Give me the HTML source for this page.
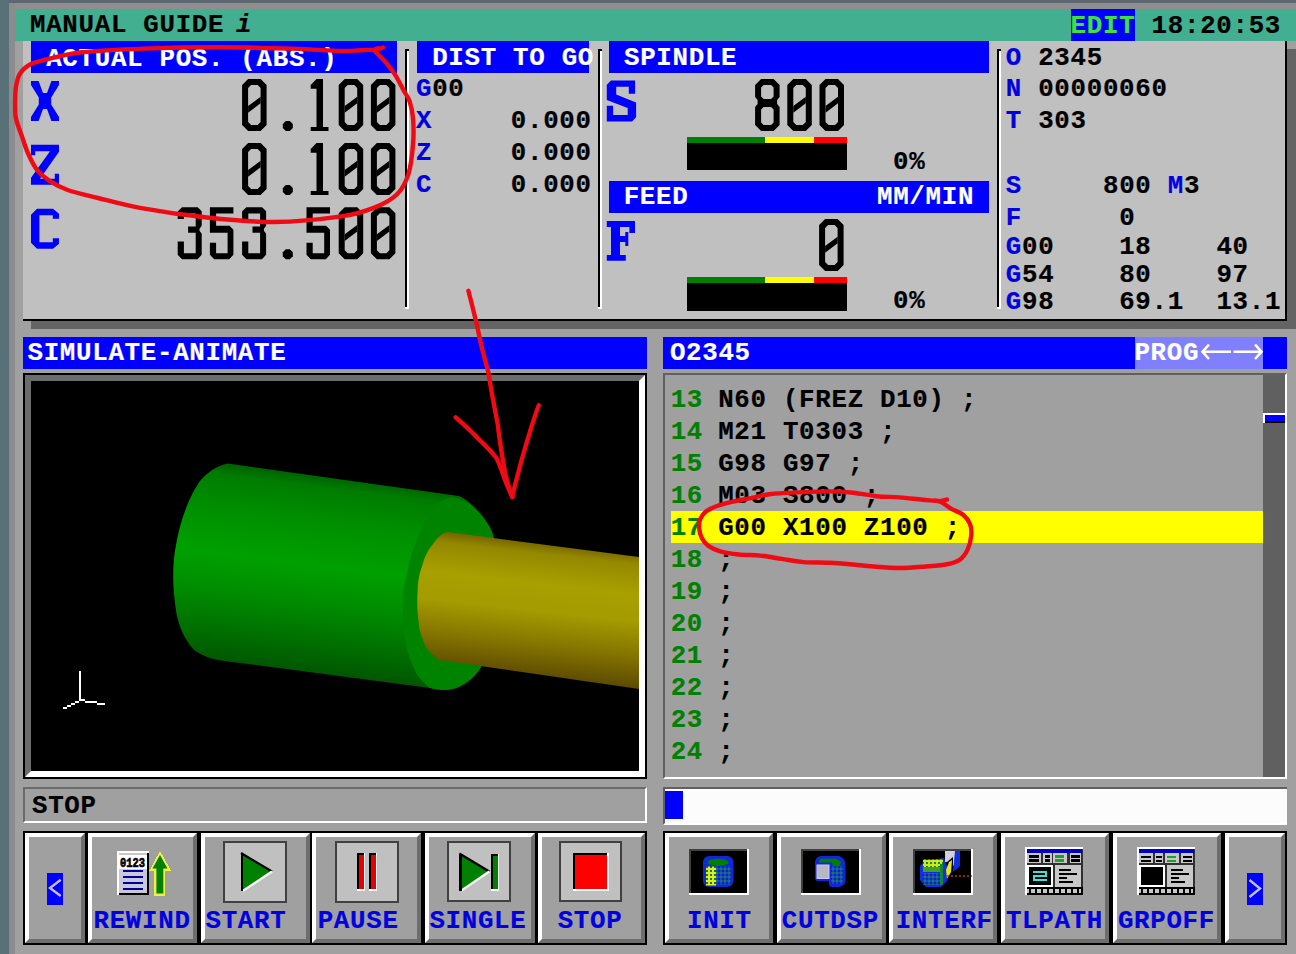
<!DOCTYPE html>
<html><head><meta charset="utf-8"><title>Manual Guide i</title><style>
html,body{margin:0;padding:0;width:1296px;height:954px;overflow:hidden;background:#a0a0a0}
.r{position:absolute;box-sizing:content-box}
.t{position:absolute;font-family:"Liberation Mono",monospace;font-weight:bold;font-size:25.8px;line-height:30px;letter-spacing:0.7px;white-space:pre;-webkit-text-stroke:0.2px currentColor}
.big{position:absolute;font-family:"Liberation Mono",monospace;font-size:76.5px;line-height:90px;white-space:pre;transform-origin:0 0;color:#000}
.lbl{position:absolute;font-family:"Liberation Mono",monospace;font-weight:bold;font-size:63.5px;line-height:70px;white-space:pre;transform-origin:0 0;transform:scaleX(0.76);color:#0000ff}
.serif{position:absolute;font-family:"Liberation Serif",serif;font-weight:bold;font-size:63px;line-height:70px;white-space:pre;transform-origin:0 0;color:#0000ff;-webkit-text-stroke:1.4px #0000ff}
.btn{position:absolute;border-style:solid;border-width:4px;border-color:#fff #6e6e6e #6e6e6e #fff;background:#a0a0a0;box-sizing:content-box}
</style></head><body>
<div class="r" style="left:0px;top:0px;width:1296.00px;height:954.00px;background:#a0a0a0;"></div>
<div class="r" style="left:0px;top:0px;width:1296.00px;height:3.00px;background:#5e6670;"></div>
<div class="r" style="left:0px;top:0px;width:8.50px;height:954.00px;background:#587078;"></div>
<div class="r" style="left:9px;top:3px;width:1287.00px;height:6.00px;background:#8e8e8e;"></div>
<div class="r" style="left:9px;top:3px;width:6.00px;height:951.00px;background:#8c8c8c;"></div>
<div class="r" style="left:15px;top:9px;width:1281.00px;height:31.50px;background:#42b090;"></div>
<div class="t" style="left:30.00px;top:11.00px;color:#000;">MANUAL GUIDE</div>
<div class="t" style="left:236px;top:11px;font-style:italic">i</div>
<div class="r" style="left:1071px;top:9px;width:64.00px;height:31.50px;background:#0000ff;"></div>
<div class="t" style="left:1070.60px;top:12.00px;color:#40e040;">EDIT</div>
<div class="t" style="left:1151.60px;top:12.00px;color:#000;">18:20:53</div>
<div class="r" style="left:31px;top:321px;width:1265.00px;height:7.50px;background:#646464;"></div>
<div class="r" style="left:1287px;top:49px;width:9.00px;height:279.50px;background:#646464;"></div>
<div class="r" style="left:23px;top:40.5px;width:1264.00px;height:280.50px;background:#c0c0c0;"></div>
<div class="r" style="left:1285px;top:40.5px;width:2.00px;height:280.50px;background:#000;"></div>
<div class="r" style="left:23px;top:318.5px;width:1264.00px;height:2.50px;background:#000;"></div>
<div class="r" style="left:31px;top:40.5px;width:366.00px;height:32.00px;background:#0000ff;"></div>
<div class="t" style="left:46.20px;top:44.50px;color:#fff;">ACTUAL POS. (ABS.)</div>
<div class="r" style="left:417px;top:40.5px;width:172.00px;height:32.00px;background:#0000ff;"></div>
<div class="t" style="left:432.20px;top:43.70px;color:#fff;">DIST TO GO</div>
<div class="r" style="left:609px;top:40.5px;width:380.00px;height:32.00px;background:#0000ff;"></div>
<div class="t" style="left:624.00px;top:43.50px;color:#fff;">SPINDLE</div>
<div class="r" style="left:609px;top:180.6px;width:380.00px;height:32.40px;background:#0000ff;"></div>
<div class="t" style="left:623.70px;top:183.00px;color:#fff;">FEED</div>
<div class="t" style="left:877.00px;top:183.00px;color:#fff;">MM/MIN</div>
<div class="r" style="left:405px;top:49px;width:2.20px;height:258.00px;background:#000;"></div>
<div class="r" style="left:407.2px;top:49px;width:1.80px;height:259.60px;background:#fff;"></div>
<div class="r" style="left:405px;top:307px;width:4.00px;height:1.60px;background:#fff;"></div>
<div class="r" style="left:405px;top:49px;width:4.00px;height:2.00px;background:#000;"></div>
<div class="r" style="left:597.6px;top:49px;width:2.20px;height:258.00px;background:#000;"></div>
<div class="r" style="left:599.8000000000001px;top:49px;width:1.80px;height:259.60px;background:#fff;"></div>
<div class="r" style="left:597.6px;top:307px;width:4.00px;height:1.60px;background:#fff;"></div>
<div class="r" style="left:597.6px;top:49px;width:4.00px;height:2.00px;background:#000;"></div>
<div class="r" style="left:997px;top:49px;width:2.20px;height:258.00px;background:#000;"></div>
<div class="r" style="left:999.2px;top:49px;width:1.80px;height:259.60px;background:#fff;"></div>
<div class="r" style="left:997px;top:307px;width:4.00px;height:1.60px;background:#fff;"></div>
<div class="r" style="left:997px;top:49px;width:4.00px;height:2.00px;background:#000;"></div>
<div class="t" style="left:416.00px;top:75.00px;color:#0000e0;">G</div>
<div class="t" style="left:432.20px;top:75.00px;color:#000;">00</div>
<div class="t" style="left:416.00px;top:107.20px;color:#0000e0;">X</div>
<div class="t" style="left:510.80px;top:107.20px;color:#000;">0.000</div>
<div class="t" style="left:416.00px;top:139.20px;color:#0000e0;">Z</div>
<div class="t" style="left:510.80px;top:139.20px;color:#000;">0.000</div>
<div class="t" style="left:416.00px;top:171.20px;color:#0000e0;">C</div>
<div class="t" style="left:510.80px;top:171.20px;color:#000;">0.000</div>
<div class="r" style="left:687px;top:137px;width:78.00px;height:6.30px;background:#008000;"></div>
<div class="r" style="left:765px;top:137px;width:48.50px;height:6.30px;background:#ffff00;"></div>
<div class="r" style="left:813.5px;top:137px;width:33.50px;height:6.30px;background:#ff0000;"></div>
<div class="r" style="left:687px;top:143.3px;width:160.00px;height:27.20px;background:#000;"></div>
<div class="t" style="left:893.00px;top:147.50px;color:#000;">0%</div>
<div class="r" style="left:687px;top:276.5px;width:78.00px;height:6.20px;background:#008000;"></div>
<div class="r" style="left:765px;top:276.5px;width:48.50px;height:6.20px;background:#ffff00;"></div>
<div class="r" style="left:813.5px;top:276.5px;width:33.50px;height:6.20px;background:#ff0000;"></div>
<div class="r" style="left:687px;top:282.7px;width:160.00px;height:28.30px;background:#000;"></div>
<div class="t" style="left:893.00px;top:287.30px;color:#000;">0%</div>
<div class="t" style="left:1005.80px;top:43.50px;color:#0000e0;">O</div>
<div class="t" style="left:1038.20px;top:43.50px;color:#000;">2345</div>
<div class="t" style="left:1005.80px;top:75.40px;color:#0000e0;">N</div>
<div class="t" style="left:1038.20px;top:75.40px;color:#000;">00000060</div>
<div class="t" style="left:1005.80px;top:107.30px;color:#0000e0;">T</div>
<div class="t" style="left:1038.20px;top:107.30px;color:#000;">303</div>
<div class="t" style="left:1005.80px;top:172.00px;color:#0000e0;">S</div>
<div class="t" style="left:1103.00px;top:172.00px;color:#000;">800</div>
<div class="t" style="left:1167.80px;top:172.00px;color:#0000e0;">M</div>
<div class="t" style="left:1184.00px;top:172.00px;color:#000;">3</div>
<div class="t" style="left:1005.80px;top:204.00px;color:#0000e0;">F</div>
<div class="t" style="left:1119.20px;top:204.00px;color:#000;">0</div>
<div class="t" style="left:1005.80px;top:233.00px;color:#0000e0;">G</div>
<div class="t" style="left:1022.00px;top:233.00px;color:#000;">00</div>
<div class="t" style="left:1119.20px;top:233.00px;color:#000;">18</div>
<div class="t" style="left:1216.40px;top:233.00px;color:#000;">40</div>
<div class="t" style="left:1005.80px;top:260.50px;color:#0000e0;">G</div>
<div class="t" style="left:1022.00px;top:260.50px;color:#000;">54</div>
<div class="t" style="left:1119.20px;top:260.50px;color:#000;">80</div>
<div class="t" style="left:1216.40px;top:260.50px;color:#000;">97</div>
<div class="t" style="left:1005.80px;top:288.00px;color:#0000e0;">G</div>
<div class="t" style="left:1022.00px;top:288.00px;color:#000;">98</div>
<div class="t" style="left:1119.20px;top:288.00px;color:#000;">69.1</div>
<div class="t" style="left:1216.40px;top:288.00px;color:#000;">13.1</div>
<div class="r" style="left:23px;top:336.7px;width:624.00px;height:32.30px;background:#0000ff;"></div>
<div class="t" style="left:27.50px;top:339.00px;color:#fff;">SIMULATE-ANIMATE</div>
<div class="r" style="left:23px;top:373px;width:624.00px;height:406.00px;background:#000;"></div>
<div class="r" style="left:25px;top:375px;width:608px;height:390px;border-style:solid;border-width:6px;border-color:#6c6c6c #fff #fff #6c6c6c;background:#000"></div>
<svg style="position:absolute;left:31px;top:381px" width="608" height="390" viewBox="31 381 608 390">
<defs>
<linearGradient id="gg" gradientUnits="userSpaceOnUse" x1="236" y1="466" x2="210" y2="676">
<stop offset="0" stop-color="#006400"/>
<stop offset="0.05" stop-color="#007c00"/>
<stop offset="0.2" stop-color="#008e00"/>
<stop offset="0.42" stop-color="#00a000"/>
<stop offset="0.6" stop-color="#008c00"/>
<stop offset="0.8" stop-color="#006c00"/>
<stop offset="1" stop-color="#004a00"/>
</linearGradient>
<linearGradient id="yg" gradientUnits="userSpaceOnUse" x1="520" y1="540" x2="505" y2="676">
<stop offset="0" stop-color="#746400"/>
<stop offset="0.08" stop-color="#948800"/>
<stop offset="0.3" stop-color="#a8a000"/>
<stop offset="0.5" stop-color="#a49c00"/>
<stop offset="0.75" stop-color="#847400"/>
<stop offset="1" stop-color="#5a4800"/>
</linearGradient>
</defs>
<path d="M228,463.5 L459,496 C470,501 484,515 492,532 L496,545 L496,640 C490,655 480,670 471,679 L445.4,690 L228,661.4 C215,660 202,657 193,649 C185,640 177,625 175,603 C172,580 173,560 176,545 C180,520 190,495 200,481 C208,472 216,466 228,463.5 Z" fill="url(#gg)"/>
<path d="M452.3,497.3 C470,500 484,515 491.5,530.8 C497,545 498,600 494,630 C490,655 480,672 471,679 C463,686 455,690 445.4,690 C437,690 429,688 429.2,687.7 C420,680 415,672 415.4,671.5 C408,655 406,646 406.2,646.2 C402,625 402.7,609.2 402.7,609.2 C403,590 405,580 407.3,572.3 C410,555 415,545 417.7,537.7 C424,522 430,512 433.8,507.7 C440,501 446,498 452.3,497.3 Z" fill="#008400"/>
<path d="M447.7,532 L639,557 L639,689 L447.7,661.2 C440,660 432,659 436.2,657.7 C430,652 427,650 424.6,643.9 C420,633 419,628 418.8,623 C417,610 417,600 417.7,590.8 C418,578 420,572 422.3,565.4 C425,556 428,550 432.7,544.6 C437,538 442,533 447.7,532 Z" fill="url(#yg)"/>
<g fill="#fff">
<rect x="79" y="671" width="2" height="30"/>
<rect x="79" y="699" width="6" height="2"/>
<rect x="85" y="701" width="12" height="2"/>
<rect x="97" y="703" width="8" height="2"/>
<rect x="75" y="701" width="4" height="2"/>
<rect x="71" y="703" width="4" height="2"/>
<rect x="67" y="705" width="4" height="2"/>
<rect x="63" y="707" width="4" height="2"/>
</g>
</svg>

<div class="r" style="left:23px;top:787px;width:620px;height:32px;border-style:solid;border-width:2px;border-color:#6a6a6a #fff #fff #6a6a6a;background:#a0a0a0"></div>
<div class="t" style="left:32.00px;top:792.30px;color:#000;">STOP</div>
<div class="r" style="left:663px;top:336.7px;width:624.00px;height:32.30px;background:#0000ff;"></div>
<div class="r" style="left:1135px;top:336.7px;width:128.00px;height:32.30px;background:#8080ff;"></div>
<div class="t" style="left:669.90px;top:339.00px;color:#fff;">O2345</div>
<div class="t" style="left:1134.40px;top:338.60px;color:#fff;">PROG</div>
<svg style="position:absolute;left:1195px;top:340px" width="70" height="24" viewBox="1195 340 70 24">
<g stroke="#fff" stroke-width="2.6" fill="none">
<path d="M1209,344.5 L1202.5,351.8 L1209,359"/>
<path d="M1255,344.5 L1261.5,351.8 L1255,359"/>
<path d="M1203,351.8 L1231,351.8 M1233.5,351.8 L1261,351.8"/>
</g>
</svg>

<div class="r" style="left:663px;top:373px;width:620px;height:402px;border-style:solid;border-width:2px;border-color:#606060 #fff #fff #606060;background:#a0a0a0"></div>
<div class="r" style="left:1263px;top:375px;width:22.00px;height:402.00px;background:#606060;"></div>
<div class="r" style="left:1263px;top:413.3px;width:22.00px;height:9.40px;background:#fff;"></div>
<div class="r" style="left:1265px;top:415.3px;width:20.00px;height:7.40px;background:#0000ff;"></div>
<div class="r" style="left:1265px;top:420.7px;width:20.00px;height:2.00px;background:#000;"></div>
<div class="r" style="left:671px;top:510.7px;width:592.00px;height:32.30px;background:#ffff00;"></div>
<div class="t" style="left:670.70px;top:385.50px;color:#008000;">13</div>
<div class="t" style="left:718.20px;top:385.50px;color:#000;">N60 (FREZ D10) ;</div>
<div class="t" style="left:670.70px;top:417.50px;color:#008000;">14</div>
<div class="t" style="left:718.20px;top:417.50px;color:#000;">M21 T0303 ;</div>
<div class="t" style="left:670.70px;top:449.50px;color:#008000;">15</div>
<div class="t" style="left:718.20px;top:449.50px;color:#000;">G98 G97 ;</div>
<div class="t" style="left:670.70px;top:481.50px;color:#008000;">16</div>
<div class="t" style="left:718.20px;top:481.50px;color:#000;">M03 S800 ;</div>
<div class="t" style="left:670.70px;top:513.50px;color:#008000;">17</div>
<div class="t" style="left:718.20px;top:513.50px;color:#000;">G00 X100 Z100 ;</div>
<div class="t" style="left:670.70px;top:545.50px;color:#008000;">18</div>
<div class="t" style="left:718.20px;top:545.50px;color:#000;">;</div>
<div class="t" style="left:670.70px;top:577.50px;color:#008000;">19</div>
<div class="t" style="left:718.20px;top:577.50px;color:#000;">;</div>
<div class="t" style="left:670.70px;top:609.50px;color:#008000;">20</div>
<div class="t" style="left:718.20px;top:609.50px;color:#000;">;</div>
<div class="t" style="left:670.70px;top:641.50px;color:#008000;">21</div>
<div class="t" style="left:718.20px;top:641.50px;color:#000;">;</div>
<div class="t" style="left:670.70px;top:673.50px;color:#008000;">22</div>
<div class="t" style="left:718.20px;top:673.50px;color:#000;">;</div>
<div class="t" style="left:670.70px;top:705.50px;color:#008000;">23</div>
<div class="t" style="left:718.20px;top:705.50px;color:#000;">;</div>
<div class="t" style="left:670.70px;top:737.50px;color:#008000;">24</div>
<div class="t" style="left:718.20px;top:737.50px;color:#000;">;</div>
<div class="r" style="left:663px;top:787px;width:622px;height:34px;border-style:solid;border-width:2px 0 2px 2px;border-color:#606060 #fff #fff #606060;background:#fcfcfc"></div>
<div class="r" style="left:665px;top:791px;width:18.00px;height:28.00px;background:#0000ff;"></div>
<div class="r" style="left:23px;top:831px;width:624.00px;height:114.00px;background:#000;"></div>
<div class="btn" style="left:25px;top:833px;width:52.00px;height:102px"></div>
<div class="btn" style="left:88px;top:833px;width:101.00px;height:102px"></div>
<div class="btn" style="left:200.5px;top:833px;width:101.00px;height:102px"></div>
<div class="btn" style="left:312px;top:833px;width:101.00px;height:102px"></div>
<div class="btn" style="left:424.5px;top:833px;width:102.00px;height:102px"></div>
<div class="btn" style="left:537.5px;top:833px;width:99.50px;height:102px"></div>
<div class="r" style="left:663px;top:831px;width:624.00px;height:114.00px;background:#000;"></div>
<div class="btn" style="left:665px;top:833px;width:99.60px;height:102px"></div>
<div class="btn" style="left:777px;top:833px;width:100.60px;height:102px"></div>
<div class="btn" style="left:889px;top:833px;width:99.50px;height:102px"></div>
<div class="btn" style="left:1001px;top:833px;width:100.00px;height:102px"></div>
<div class="btn" style="left:1113px;top:833px;width:100.00px;height:102px"></div>
<div class="btn" style="left:1225px;top:833px;width:52.00px;height:102px"></div>
<div class="t" style="left:93.50px;top:907.00px;color:#0000e0;">REWIND</div>
<div class="t" style="left:205.50px;top:907.00px;color:#0000e0;">START</div>
<div class="t" style="left:317.70px;top:907.00px;color:#0000e0;">PAUSE</div>
<div class="t" style="left:429.40px;top:907.00px;color:#0000e0;">SINGLE</div>
<div class="t" style="left:557.70px;top:907.00px;color:#0000e0;">STOP</div>
<div class="t" style="left:687.00px;top:907.00px;color:#0000e0;">INIT</div>
<div class="t" style="left:781.80px;top:907.00px;color:#0000e0;">CUTDSP</div>
<div class="t" style="left:895.70px;top:907.00px;color:#0000e0;">INTERF</div>
<div class="t" style="left:1005.90px;top:907.00px;color:#0000e0;">TLPATH</div>
<div class="t" style="left:1117.90px;top:907.00px;color:#0000e0;">GRPOFF</div>
<svg style="position:absolute;left:0;top:830px" width="1296" height="124" viewBox="0 830 1296 124" shape-rendering="crispEdges">
<defs>
<pattern id="pY" patternUnits="userSpaceOnUse" width="4" height="4"><rect width="4" height="4" fill="#d8f020"/><rect x="2" y="2" width="2" height="2" fill="#207020"/></pattern>
<pattern id="pB" patternUnits="userSpaceOnUse" width="4" height="4"><rect width="4" height="4" fill="#2040d0"/><rect x="0" y="0" width="2" height="2" fill="#108050"/><rect x="2" y="2" width="2" height="2" fill="#0030a0"/></pattern>
<pattern id="pYG" patternUnits="userSpaceOnUse" width="4" height="4"><rect width="4" height="4" fill="#c8e820"/><rect x="2" y="2" width="2" height="2" fill="#208020"/></pattern>
</defs>
<!-- < button -->
<rect x="47" y="872.6" width="16.2" height="32.3" fill="#0000ff"/>
<path d="M60.7,879.8 L50,888 L60.7,896" stroke="#c0c0f0" stroke-width="2.4" fill="none" shape-rendering="auto"/>
<!-- > button -->
<rect x="1247" y="873" width="16" height="32" fill="#0000ff"/>
<path d="M1249.5,880 L1260,888.5 L1249.5,897" stroke="#c0c0f0" stroke-width="2.4" fill="none" shape-rendering="auto"/>
<!-- REWIND doc -->
<rect x="117" y="851" width="32" height="44" fill="#fff"/>
<rect x="147" y="853" width="2" height="42" fill="#000"/>
<rect x="119" y="893" width="30" height="2" fill="#000"/>
<rect x="119" y="853" width="28" height="2" fill="#c8c8c8"/>
<rect x="119" y="868.6" width="28" height="24.4" fill="#c8c8d8"/>
<text x="120" y="867" font-family="Liberation Mono" font-weight="bold" font-size="12.5" textLength="25" lengthAdjust="spacingAndGlyphs" fill="#000" stroke="#000" stroke-width="0.7">0123</text>
<rect x="123" y="869.5" width="20" height="2.4" fill="#0000a0"/>
<rect x="123" y="875.5" width="20" height="2.4" fill="#0000a0"/>
<rect x="123" y="881.5" width="20" height="2.4" fill="#0000a0"/>
<rect x="123" y="887.5" width="20" height="2.4" fill="#0000a0"/>
<path d="M160,851 L171,870.5 L165.3,870.5 L165.3,895.5 L154.4,895.5 L154.4,870.5 L149.5,870.5 Z" fill="#f0f040"/>
<path d="M160,855 L167.5,868.5 L163.3,868.5 L163.3,893.5 L156.4,893.5 L156.4,868.5 L152.5,868.5 Z" fill="#008000" shape-rendering="auto"/>
<!-- START -->
<rect x="224" y="842" width="62" height="59.5" fill="#c0c0c0" stroke="#404040" stroke-width="2"/>
<path d="M241,853 L272,871.5 L241,890.8 Z" fill="#008000" shape-rendering="auto"/>
<path d="M241,853 L272,871.5" stroke="#000" stroke-width="2.2" shape-rendering="auto"/>
<path d="M243,890.8 L272,871.5" stroke="#fff" stroke-width="2.2" shape-rendering="auto"/>
<rect x="241" y="853" width="2.2" height="38" fill="#000"/>
<!-- PAUSE -->
<rect x="336" y="842" width="62" height="59.5" fill="#c0c0c0" stroke="#404040" stroke-width="2"/>
<rect x="356.8" y="853" width="8.3" height="38.1" fill="#fff"/>
<rect x="356.8" y="853" width="6.8" height="36.3" fill="#000"/>
<rect x="358.8" y="855" width="4.8" height="34.3" fill="#e80000"/>
<rect x="368.9" y="853" width="8.3" height="38.1" fill="#fff"/>
<rect x="368.9" y="853" width="6.8" height="36.3" fill="#000"/>
<rect x="370.9" y="855" width="4.8" height="34.3" fill="#e80000"/>
<!-- SINGLE -->
<rect x="448.4" y="842.4" width="61.1" height="59" fill="#c0c0c0" stroke="#404040" stroke-width="2"/>
<path d="M459.4,853.5 L489.3,871.5 L459.4,890.6 Z" fill="#008000" shape-rendering="auto"/>
<path d="M459.4,853.5 L489.3,871.5" stroke="#000" stroke-width="2.2" shape-rendering="auto"/>
<path d="M461.4,890.6 L489.3,871.5" stroke="#fff" stroke-width="2.2" shape-rendering="auto"/>
<rect x="459.4" y="853.5" width="2.2" height="37" fill="#000"/>
<rect x="491.2" y="853.5" width="7.8" height="37.1" fill="#fff"/>
<rect x="491.2" y="853.5" width="6.3" height="35.3" fill="#000"/>
<rect x="493.2" y="855.5" width="4.3" height="33.3" fill="#008000"/>
<!-- STOP -->
<rect x="560.3" y="842.4" width="61.1" height="59" fill="#c0c0c0" stroke="#404040" stroke-width="2"/>
<rect x="573" y="853.4" width="36" height="37.2" fill="#fff"/>
<rect x="573" y="853.4" width="34.2" height="35.4" fill="#000"/>
<rect x="575" y="855.4" width="32.2" height="33.4" fill="#ff0000"/>
<!-- INIT / CUTDSP / INTERF boxes -->
<g>
<rect x="689" y="849" width="60" height="46" fill="#fff"/>
<rect x="689" y="849" width="58" height="44" fill="#404040"/>
<rect x="691" y="851" width="56" height="42" fill="#000"/>
<rect x="801.3" y="849" width="60" height="46" fill="#fff"/>
<rect x="801.3" y="849" width="58" height="44" fill="#404040"/>
<rect x="803.3" y="851" width="56" height="42" fill="#000"/>
<rect x="913.3" y="849" width="60" height="46" fill="#fff"/>
<rect x="913.3" y="849" width="58" height="44" fill="#404040"/>
<rect x="915.3" y="851" width="56" height="42" fill="#000"/>
</g>
<g shape-rendering="auto">
<!-- INIT cylinder -->
<rect x="703" y="856" width="30.5" height="31" rx="6" fill="#1028d8"/>
<ellipse cx="718" cy="862.3" rx="10.5" ry="3.6" fill="#008000"/>
<rect x="706" y="866.5" width="10" height="19" fill="url(#pY)"/>
<rect x="716" y="866.5" width="15" height="18" fill="url(#pB)"/>
<!-- CUTDSP -->
<path d="M821,856 H839 Q845,858 845.5,864 V881 Q845,886 839,887 H832 Q829,887 829,884 V881 H818 Q815,881 815,878 V862 Q816,856 821,856 Z" fill="#1028d8"/>
<path d="M820,858.8 H836 L841,862 L840,866 L833,866 L832,862.5 H819 Z" fill="#008000"/>
<rect x="817" y="865" width="12" height="13.5" fill="#b8b8c0" stroke="#c8c8ff" stroke-width="1"/>
<rect x="831" y="866" width="12" height="18" fill="url(#pB)"/>
<!-- INTERF -->
<path d="M924,861 L944,858 L947,866 L947,881 L941,887 L926,887 L920,880 L920,866 Z" fill="#1030e0"/>
<rect x="923" y="859.5" width="20" height="12" fill="url(#pYG)"/>
<rect x="923" y="867" width="20" height="5" fill="#40a020"/>
<rect x="923" y="873" width="20" height="12" fill="url(#pB)"/>
<rect x="940" y="864" width="3" height="20" fill="#108838"/>
<path d="M945,851 L957,851 L957,864 L953,866 L953,857 L947,862 L945,862 Z" fill="#d0d0e0"/>
<path d="M955,851 L960,851 L960,866 L953,872 Z" fill="#1030e0"/>
<path d="M949,862 L952,860 L951,872 L947,879 L946,870 Z" fill="#e8e800"/>
<path d="M947,876 L972,876" stroke="#c03030" stroke-width="1.6" stroke-dasharray="2,2"/>
</g>
<!-- TLPATH / GRPOFF -->
<g id="win">
<rect x="1025.2" y="847.2" width="57.8" height="47.7" fill="#fff"/>
<rect x="1027.2" y="849.2" width="55.8" height="45.7" fill="#303030"/>
<rect x="1027.2" y="849.2" width="54.8" height="3.4" fill="#0000c0"/>
<rect x="1027.3" y="853" width="13.4" height="10" fill="#c8c8c8"/>
<rect x="1043.1" y="853" width="8.4" height="10" fill="#c8c8c8"/>
<rect x="1053.2" y="853" width="13.8" height="10" fill="#c8c8c8"/>
<rect x="1069.5" y="853" width="11.5" height="10" fill="#c8c8c8"/>
<g fill="#000">
<rect x="1029" y="855.3" width="10" height="2.2"/><rect x="1029" y="859.3" width="10" height="2.2"/>
<rect x="1044.5" y="855.3" width="5.5" height="2.2"/><rect x="1044.5" y="859.3" width="5.5" height="2.2"/>
<rect x="1070.8" y="855.3" width="9" height="2.2"/><rect x="1070.8" y="859.3" width="9" height="2.2"/>
</g>
<rect x="1055" y="855.3" width="9" height="2.2" fill="#20a020"/><rect x="1055" y="859.3" width="9" height="2.2" fill="#20a020"/>
<rect x="1027.3" y="865" width="25.8" height="22" fill="#fff"/>
<rect x="1029.2" y="867.2" width="21.6" height="17.4" fill="#000"/>
<rect x="1055" y="865" width="26" height="22" fill="#c8c8c8"/>
<g fill="#000">
<rect x="1059.2" y="869.2" width="11.6" height="2"/>
<rect x="1059.2" y="873.2" width="17.7" height="2"/>
<rect x="1059.2" y="877.2" width="7.6" height="2"/>
<rect x="1059.2" y="881.2" width="13.7" height="2"/>
</g>
<rect x="1027.2" y="887" width="55.8" height="8" fill="#000"/>
<g fill="#c8c8c8">
<rect x="1027.3" y="889.2" width="1.8" height="3.6"/>
<rect x="1031" y="889.2" width="4" height="3.6"/><rect x="1037" y="889.2" width="4" height="3.6"/><rect x="1043" y="889.2" width="4" height="3.6"/>
<rect x="1049" y="889.2" width="4" height="3.6"/><rect x="1055" y="889.2" width="4" height="3.6"/><rect x="1061" y="889.2" width="4" height="3.6"/>
<rect x="1067" y="889.2" width="4" height="3.6"/><rect x="1073" y="889.2" width="4" height="3.6"/><rect x="1079" y="889.2" width="2" height="3.6"/>
</g>
</g>
<g fill="#40e0d8"><rect x="1033" y="871" width="14" height="2.2"/><rect x="1044.8" y="871" width="2.2" height="6"/><rect x="1033" y="874.8" width="14" height="2.2"/><rect x="1033" y="874.8" width="2.2" height="6.2"/><rect x="1033" y="878.8" width="14" height="2.2"/></g>
<g transform="translate(111.8,0.2)"><g>
<rect x="1025.2" y="847.2" width="57.8" height="47.7" fill="#fff"/>
<rect x="1027.2" y="849.2" width="55.8" height="45.7" fill="#303030"/>
<rect x="1027.2" y="849.2" width="54.8" height="3.4" fill="#0000c0"/>
<rect x="1027.3" y="853" width="13.4" height="10" fill="#c8c8c8"/>
<rect x="1043.1" y="853" width="8.4" height="10" fill="#c8c8c8"/>
<rect x="1053.2" y="853" width="13.8" height="10" fill="#c8c8c8"/>
<rect x="1069.5" y="853" width="11.5" height="10" fill="#c8c8c8"/>
<g fill="#000">
<rect x="1029" y="855.3" width="10" height="2.2"/><rect x="1029" y="859.3" width="10" height="2.2"/>
<rect x="1044.5" y="855.3" width="5.5" height="2.2"/><rect x="1044.5" y="859.3" width="5.5" height="2.2"/>
<rect x="1070.8" y="855.3" width="9" height="2.2"/><rect x="1070.8" y="859.3" width="9" height="2.2"/>
</g>
<rect x="1055" y="855.3" width="9" height="2.2" fill="#20a020"/><rect x="1055" y="859.3" width="9" height="2.2" fill="#20a020"/>
<rect x="1027.3" y="865" width="25.8" height="22" fill="#fff"/>
<rect x="1029.2" y="867.2" width="21.6" height="17.4" fill="#000"/>
<rect x="1055" y="865" width="26" height="22" fill="#c8c8c8"/>
<g fill="#000">
<rect x="1059.2" y="869.2" width="11.6" height="2"/>
<rect x="1059.2" y="873.2" width="17.7" height="2"/>
<rect x="1059.2" y="877.2" width="7.6" height="2"/>
<rect x="1059.2" y="881.2" width="13.7" height="2"/>
</g>
<rect x="1027.2" y="887" width="55.8" height="8" fill="#000"/>
<g fill="#c8c8c8">
<rect x="1027.3" y="889.2" width="1.8" height="3.6"/>
<rect x="1031" y="889.2" width="4" height="3.6"/><rect x="1037" y="889.2" width="4" height="3.6"/><rect x="1043" y="889.2" width="4" height="3.6"/>
<rect x="1049" y="889.2" width="4" height="3.6"/><rect x="1055" y="889.2" width="4" height="3.6"/><rect x="1061" y="889.2" width="4" height="3.6"/>
<rect x="1067" y="889.2" width="4" height="3.6"/><rect x="1073" y="889.2" width="4" height="3.6"/><rect x="1079" y="889.2" width="2" height="3.6"/>
</g>
</g></g>
</svg>

<svg style="position:absolute;left:0;top:0" width="1296" height="330" viewBox="0 0 1296 330"><g fill="#000"><path transform="translate(242.10,79.00)" d="M6,0 H18.5 L24.5,6 V46 L18.5,52 H6 L0,46 V6 Z M9,6 L6,9 V43 L9,46 H15.5 L18.5,43 V9 L15.5,6 Z" fill-rule="evenodd"/><path transform="translate(242.10,79.00)" d="M6,27 L18.5,17.8 V24.3 L6,33.8 Z" fill-rule="evenodd"/><path transform="translate(274.30,79.00)" d="M11.5,42 H15.5 L18.5,45 V49 L15.5,52 H11.5 L8.5,49 V45 L11.5,42 Z" fill-rule="evenodd"/><path transform="translate(306.50,79.00)" d="M10,0 H16.5 V48 H22 V52 H4.2 V48 H10 V9.7 H4.2 V6 Z" fill-rule="evenodd"/><path transform="translate(338.70,79.00)" d="M6,0 H18.5 L24.5,6 V46 L18.5,52 H6 L0,46 V6 Z M9,6 L6,9 V43 L9,46 H15.5 L18.5,43 V9 L15.5,6 Z" fill-rule="evenodd"/><path transform="translate(338.70,79.00)" d="M6,27 L18.5,17.8 V24.3 L6,33.8 Z" fill-rule="evenodd"/><path transform="translate(370.90,79.00)" d="M6,0 H18.5 L24.5,6 V46 L18.5,52 H6 L0,46 V6 Z M9,6 L6,9 V43 L9,46 H15.5 L18.5,43 V9 L15.5,6 Z" fill-rule="evenodd"/><path transform="translate(370.90,79.00)" d="M6,27 L18.5,17.8 V24.3 L6,33.8 Z" fill-rule="evenodd"/><path transform="translate(242.10,143.00)" d="M6,0 H18.5 L24.5,6 V46 L18.5,52 H6 L0,46 V6 Z M9,6 L6,9 V43 L9,46 H15.5 L18.5,43 V9 L15.5,6 Z" fill-rule="evenodd"/><path transform="translate(242.10,143.00)" d="M6,27 L18.5,17.8 V24.3 L6,33.8 Z" fill-rule="evenodd"/><path transform="translate(274.30,143.00)" d="M11.5,42 H15.5 L18.5,45 V49 L15.5,52 H11.5 L8.5,49 V45 L11.5,42 Z" fill-rule="evenodd"/><path transform="translate(306.50,143.00)" d="M10,0 H16.5 V48 H22 V52 H4.2 V48 H10 V9.7 H4.2 V6 Z" fill-rule="evenodd"/><path transform="translate(338.70,143.00)" d="M6,0 H18.5 L24.5,6 V46 L18.5,52 H6 L0,46 V6 Z M9,6 L6,9 V43 L9,46 H15.5 L18.5,43 V9 L15.5,6 Z" fill-rule="evenodd"/><path transform="translate(338.70,143.00)" d="M6,27 L18.5,17.8 V24.3 L6,33.8 Z" fill-rule="evenodd"/><path transform="translate(370.90,143.00)" d="M6,0 H18.5 L24.5,6 V46 L18.5,52 H6 L0,46 V6 Z M9,6 L6,9 V43 L9,46 H15.5 L18.5,43 V9 L15.5,6 Z" fill-rule="evenodd"/><path transform="translate(370.90,143.00)" d="M6,27 L18.5,17.8 V24.3 L6,33.8 Z" fill-rule="evenodd"/><path transform="translate(177.70,207.30)" d="M4.3,0 H20 L24,4 V18.5 L21.8,21.5 V23.5 L24,26.5 V47.5 L19.8,52 H4.3 L0,47.5 V34.3 H6.2 V46 H18 V25.4 H10.4 V19.3 H18 V6.2 H6.2 V11.6 H0 V4.3 Z" fill-rule="evenodd"/><path transform="translate(209.90,207.30)" d="M0,0 H23.5 V6.2 H6.2 V18.5 H19.6 L23.5,22.4 V47.5 L19.3,52 H4.3 L0,47.5 V35.5 H6.2 V46 H17.7 V25.4 H0 Z" fill-rule="evenodd"/><path transform="translate(242.10,207.30)" d="M4.3,0 H20 L24,4 V18.5 L21.8,21.5 V23.5 L24,26.5 V47.5 L19.8,52 H4.3 L0,47.5 V34.3 H6.2 V46 H18 V25.4 H10.4 V19.3 H18 V6.2 H6.2 V11.6 H0 V4.3 Z" fill-rule="evenodd"/><path transform="translate(274.30,207.30)" d="M11.5,42 H15.5 L18.5,45 V49 L15.5,52 H11.5 L8.5,49 V45 L11.5,42 Z" fill-rule="evenodd"/><path transform="translate(306.50,207.30)" d="M0,0 H23.5 V6.2 H6.2 V18.5 H19.6 L23.5,22.4 V47.5 L19.3,52 H4.3 L0,47.5 V35.5 H6.2 V46 H17.7 V25.4 H0 Z" fill-rule="evenodd"/><path transform="translate(338.70,207.30)" d="M6,0 H18.5 L24.5,6 V46 L18.5,52 H6 L0,46 V6 Z M9,6 L6,9 V43 L9,46 H15.5 L18.5,43 V9 L15.5,6 Z" fill-rule="evenodd"/><path transform="translate(338.70,207.30)" d="M6,27 L18.5,17.8 V24.3 L6,33.8 Z" fill-rule="evenodd"/><path transform="translate(370.90,207.30)" d="M6,0 H18.5 L24.5,6 V46 L18.5,52 H6 L0,46 V6 Z M9,6 L6,9 V43 L9,46 H15.5 L18.5,43 V9 L15.5,6 Z" fill-rule="evenodd"/><path transform="translate(370.90,207.30)" d="M6,27 L18.5,17.8 V24.3 L6,33.8 Z" fill-rule="evenodd"/><path transform="translate(755.10,79.00)" d="M6,0 H18.5 L24.5,6 V18 L22,21 V25 L24.5,28 V46 L18.5,52 H6 L0,46 V28 L2.5,25 V21 L0,18 V6 Z M8.5,6 L6,8.5 V17.5 L8.5,20 H16 L18.5,17.5 V8.5 L16,6 Z M8.5,28 L6,30.5 V43.5 L8.5,46 H16 L18.5,43.5 V30.5 L16,28 Z" fill-rule="evenodd"/><path transform="translate(787.30,79.00)" d="M6,0 H18.5 L24.5,6 V46 L18.5,52 H6 L0,46 V6 Z M9,6 L6,9 V43 L9,46 H15.5 L18.5,43 V9 L15.5,6 Z" fill-rule="evenodd"/><path transform="translate(787.30,79.00)" d="M6,27 L18.5,17.8 V24.3 L6,33.8 Z" fill-rule="evenodd"/><path transform="translate(819.50,79.00)" d="M6,0 H18.5 L24.5,6 V46 L18.5,52 H6 L0,46 V6 Z M9,6 L6,9 V43 L9,46 H15.5 L18.5,43 V9 L15.5,6 Z" fill-rule="evenodd"/><path transform="translate(819.50,79.00)" d="M6,27 L18.5,17.8 V24.3 L6,33.8 Z" fill-rule="evenodd"/><path transform="translate(819.10,219.00)" d="M6,0 H18.5 L24.5,6 V46 L18.5,52 H6 L0,46 V6 Z M9,6 L6,9 V43 L9,46 H15.5 L18.5,43 V9 L15.5,6 Z" fill-rule="evenodd"/><path transform="translate(819.10,219.00)" d="M6,27 L18.5,17.8 V24.3 L6,33.8 Z" fill-rule="evenodd"/></g><g fill="#0000ff"><path transform="translate(31.00,81.00)" d="M0,0 H7.6 L12,12 H16 L20.4,0 H28 V4 L20.2,16.6 V23.4 L28,36 V40 H20.4 L16,28 H12 L7.6,40 H0 V36 L7.8,23.4 V16.6 L0,4 Z"/><path transform="translate(31.00,144.80)" d="M0,0 H28 V7 L9,34 H23.8 V29 H28 V40 H0 V33 L19,6.5 H4.2 V10.5 H0 Z"/><path transform="translate(31.00,208.70)" d="M6,0 H22 L28,5 V10 H21.8 V6.5 H8.4 V33.5 H21.8 V29.5 H28 V35 L22,40 H6 L0,34 V6 Z"/><path transform="translate(606.80,80.50)" d="M4.2,0 H28.3 V13.2 H22 V6.3 H9.4 V14 L29.3,22 V36.7 L25.2,41 H0 V25.2 H6.3 V34.6 H20.9 V27.5 L0,19.5 V4.2 Z"/><path transform="translate(606.80,221.00)" d="M0,0 H28.2 V12 H22.6 V6 H13.2 V15 H18.5 V11 H21.5 V25 H18.5 V21 H13.2 V34 H19 V39.8 H0 V34 H4.2 V6 H0 Z"/></g></svg>
<svg style="position:absolute;left:0;top:0" width="1296" height="954" viewBox="0 0 1296 954">
<g stroke="#f00a14" stroke-width="4.4" fill="none" stroke-linecap="round" stroke-linejoin="round">
<path d="M383.0,47.5 C382.0,47.8 380.8,48.9 377.0,49.4 C373.2,49.9 366.2,50.0 360.0,50.3 C353.8,50.6 351.4,51.3 340.0,51.0 C328.6,50.7 312.0,49.2 291.6,48.6 C271.2,48.0 242.2,47.3 217.5,47.3 C192.8,47.3 166.1,47.8 143.5,48.6 C120.9,49.4 98.2,50.4 81.7,52.3 C65.2,54.2 53.4,57.8 44.5,60.0 C35.6,62.2 32.6,62.9 28.5,65.3 C24.4,67.7 21.7,70.7 19.6,74.3 C17.5,77.9 16.8,81.7 16.0,86.7 C15.2,91.7 15.1,99.2 15.1,104.5 C15.1,109.8 14.9,113.8 16.0,118.8 C17.1,123.8 19.3,128.9 21.4,134.8 C23.5,140.7 25.8,148.5 28.5,154.4 C31.2,160.3 33.8,166.0 37.4,170.4 C41.0,174.8 44.8,177.8 49.9,181.1 C55.0,184.4 59.7,187.2 67.7,190.0 C75.7,192.8 86.0,195.0 98.0,198.0 C110.0,201.0 121.8,204.6 140.0,207.8 C158.2,211.1 184.6,215.1 207.0,217.5 C229.4,219.9 251.9,222.2 274.3,222.0 C296.7,221.8 324.6,218.8 341.4,216.4 C358.2,214.0 365.7,211.1 375.0,207.4 C384.3,203.7 391.7,199.6 397.3,194.0 C402.9,188.4 405.9,182.0 408.5,173.8 C411.1,165.6 412.2,154.1 413.0,144.8 C413.8,135.5 413.6,125.2 413.0,117.9 C412.4,110.6 411.1,105.7 409.5,101.0 C407.9,96.3 405.6,94.2 403.4,90.0 C401.1,85.8 398.4,80.1 396.0,76.1 C393.6,72.1 391.1,68.9 388.7,65.8 C386.3,62.7 383.6,60.0 381.4,57.7 C379.2,55.4 376.6,53.3 375.5,51.9 C374.4,50.5 374.6,50.1 375.0,49.5 C375.4,48.9 377.5,48.4 378.0,48.2"/>
<path d="M468.4,290.8 C472,305 476,320 478.6,333 C482,350 485,360 488.2,371.6 C492,395 495,410 497.8,424.6 C500,445 503,460 505,472.8 C507,482 510,490 512.3,496.9"/>
<path d="M455.7,417.3 C462,423 470,430 476.1,436.6 C485,445 492,452 496.6,458.3 C500,465 503,474 505,480 C508,487 510,492 512.3,496.9"/>
<path d="M538.8,405.3 C535,415 532,425 529.2,434.2 C526,445 522,458 519.5,468 C517,478 514,488 512.3,496.9"/>
<path d="M947.0,499.5 C945.7,499.8 943.5,501.2 939.4,501.2 C935.3,501.2 929.3,500.3 922.6,499.7 C915.9,499.1 907.1,498.0 899.4,497.4 C891.7,496.8 884.0,497.0 876.3,496.2 C868.6,495.4 860.8,493.5 853.1,492.7 C845.4,491.9 839.2,491.4 830.0,491.4 C820.8,491.3 807.8,492.0 798.0,492.4 C788.2,492.8 779.1,493.0 771.0,494.0 C762.9,495.0 755.7,497.1 749.4,498.4 C743.1,499.7 738.6,500.3 733.2,501.6 C727.8,502.9 721.5,504.4 717.0,506.0 C712.5,507.6 709.0,509.2 706.2,511.3 C703.4,513.5 701.5,516.0 700.3,518.9 C699.1,521.8 698.9,525.4 699.2,528.6 C699.5,531.8 700.4,535.4 701.9,538.3 C703.4,541.2 705.3,543.7 708.4,545.9 C711.5,548.1 715.2,549.9 720.2,551.3 C725.2,552.7 731.9,553.8 738.6,554.5 C745.3,555.2 753.0,554.9 760.2,555.6 C767.4,556.3 774.6,557.8 781.8,558.9 C789.0,560.0 795.4,561.5 803.4,562.1 C811.4,562.7 821.7,562.3 830.0,562.7 C838.3,563.1 845.4,563.8 853.1,564.5 C860.8,565.2 868.6,566.2 876.3,566.8 C884.0,567.4 891.7,568.0 899.4,568.0 C907.1,568.0 914.9,567.4 922.6,566.8 C930.3,566.2 939.5,565.6 945.7,564.5 C951.9,563.4 955.9,562.4 959.6,559.9 C963.3,557.4 965.8,553.4 967.7,549.4 C969.6,545.4 970.8,539.8 971.2,535.6 C971.6,531.4 971.4,527.5 970.0,524.0 C968.6,520.5 966.2,517.2 963.1,514.7 C960.0,512.2 955.2,511.0 951.5,508.9 C947.8,506.8 943.9,503.4 941.1,502.0 C938.4,500.6 936.0,500.8 935.0,500.5"/>
</g>
</svg>

</body></html>
